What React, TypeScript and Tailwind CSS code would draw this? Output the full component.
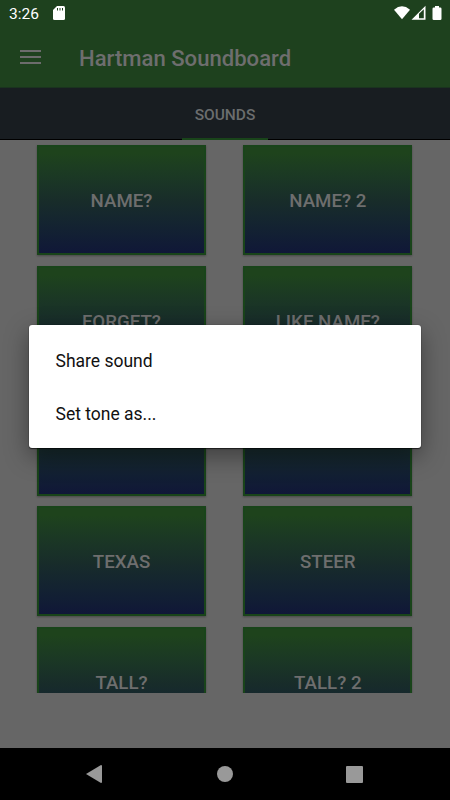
import React from "react";

const rows = [
  ["NAME?", "NAME? 2"],
  ["FORGET?", "LIKE NAME?"],
  ["", ""],
  ["TEXAS", "STEER"],
  ["TALL?", "TALL? 2"],
];

function SoundButton({ label }: { label: string }) {
  return (
    <button className="flex h-[110px] w-[169px] items-center justify-center border-2 border-[#19441a] bg-linear-to-b from-[#1e431c] from-8% via-[#182c2a] via-52% to-[#101638] bg-origin-border pt-0.5 text-[18.7px] leading-6 font-medium text-[#6e6e6e] shadow-[0_1px_2px_rgba(0,0,0,0.3)]">
      {label}
    </button>
  );
}

function StatusBar() {
  return (
    <div className="flex h-7 items-center justify-between pr-2 pl-[9px]">
      <div className="flex items-center gap-[14px]">
        <span className="text-[15.5px] leading-7 text-white">3:26</span>
        <svg width="12" height="14" viewBox="0 0 12 14" className="-mt-0.5">
          <path fill="#fff" d="M4 0h6.5Q12 0 12 1.5v11q0 1.5-1.5 1.5h-9Q0 14 0 12.5V4z" />
          <path stroke="#1e411e" strokeWidth="1" d="M4.5 2v2.5M7 2v2.5M9.5 2v2.5" />
        </svg>
      </div>
      <div className="-mr-px -mt-0.5 flex items-center">
        <svg width="50" height="16" viewBox="0 0 50 16">
          <path fill="#fff" d="M1 4.7Q9 -2 17 4.7L9 14.3z" />
          <path fill="#fff" fillRule="evenodd" d="M18.5 14.8 32.5 0.8v14zM26 8.8v4.5h4.8V4.2z" />
          <path fill="#fff" d="M42 1h4v1.5h1.2q1.3 0 1.3 1.3v9.9q0 1.3-1.3 1.3h-6.4q-1.3 0-1.3-1.3V3.8q0-1.3 1.3-1.3H42z" />
        </svg>
      </div>
    </div>
  );
}

export default function App() {
  return (
    <div className="relative flex h-[800px] w-[450px] flex-col overflow-hidden bg-[#666] font-['Roboto',sans-serif]">
      <header className="h-[87px] shrink-0 bg-[#1e411e]">
        <StatusBar />
        <div className="flex h-[59px] items-center pt-px pl-5">
          <svg width="21" height="16" viewBox="0 0 21 16" className="-mt-[3px]">
            <path stroke="#6c6c6c" strokeWidth="2" d="M0 2h21M0 8h21M0 14h21" />
          </svg>
          <h1 className="ml-[38px] text-[22.1px] leading-7 font-medium text-[#6e6e6e]">Hartman Soundboard</h1>
        </div>
      </header>
      <nav className="flex h-[53px] shrink-0 justify-center border-t border-b border-t-[#1a331f] border-b-black bg-[#181d21]">
        <div className="-mb-px flex w-[86px] items-center justify-center border-b-2 border-[#19441a] pt-[5px] text-[15.5px] font-medium text-[#6b6d6e]">
          SOUNDS
        </div>
      </nav>
      <main className="h-[553px] shrink-0 overflow-hidden pt-[5.2px] pl-[37px]">
        <div className="grid grid-cols-[169px_169px] gap-x-[37.3px] gap-y-[10.4px]">
          {rows.flat().map((label, i) => (
            <SoundButton key={i} label={label} />
          ))}
        </div>
      </main>
      <div className="grow" />
      <footer className="flex h-[52px] shrink-0 items-center justify-between bg-black pr-[87px] pl-[86px]">
        <svg width="16" height="18" viewBox="0 0 16 18" fill="#999">
          <path d="M15 0q1 0 1 1v16q0 1-1 1L0 9z" />
        </svg>
        <svg width="16" height="16" viewBox="0 0 16 16" fill="#999" className="ml-px">
          <circle cx="8" cy="8" r="8" />
        </svg>
        <div className="size-[17px] rounded-[1px] bg-[#999]" />
      </footer>
      <div
        role="dialog"
        className="absolute top-[325px] left-[29px] flex h-[123px] w-[392px] flex-col justify-center rounded-[3px] bg-white pt-0.5 pl-[26.5px] text-[17.5px] text-[#111] shadow-[0_0_1px_rgba(0,0,0,0.6),0_1px_1px_rgba(0,0,0,0.6),0_8px_24px_rgba(0,0,0,0.4)]"
      >
        <div className="flex h-[52.5px] items-center">Share sound</div>
        <div className="flex h-[52.5px] items-center">Set tone as...</div>
      </div>
    </div>
  );
}
